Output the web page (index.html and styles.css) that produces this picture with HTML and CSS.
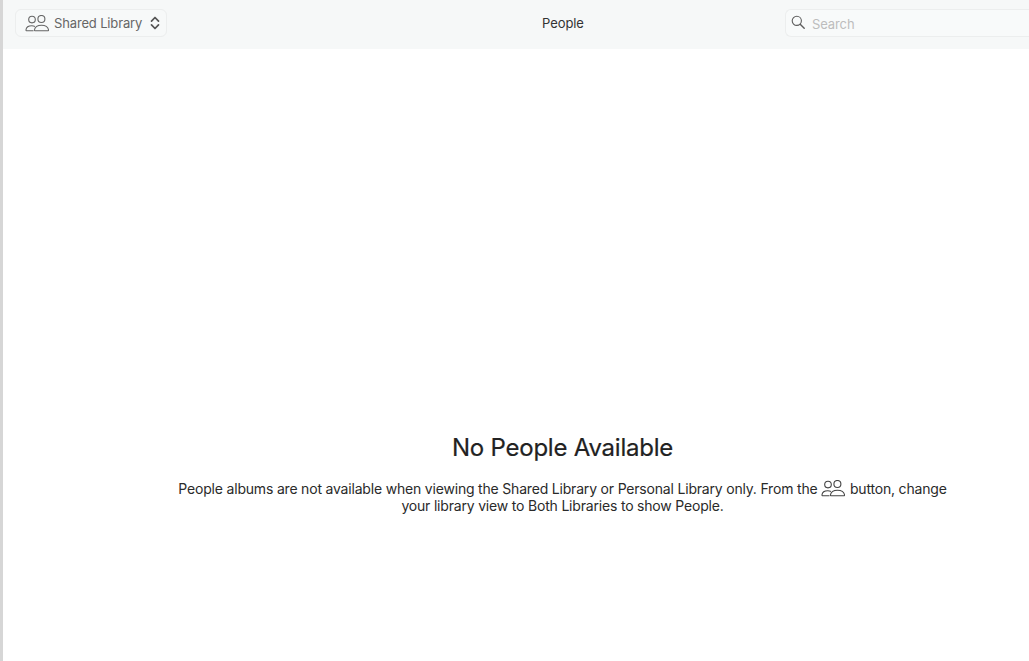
FILE: index.html
```html
<!DOCTYPE html>
<html lang="en">
<head>
<meta charset="utf-8">
<title>People</title>
<link rel="stylesheet" href="styles.css">
</head>
<body>
<div class="window">
  <header class="toolbar">
    <div class="toolbar-left">
      <button class="library-btn">
        <svg class="people-icon" viewBox="0 0 24 17" width="24" height="17" fill="none" stroke="currentColor" stroke-width="1.100"><circle cx="7" cy="4.600" r="3.300"/><circle cx="16.400" cy="4" r="3.500"/><path d="M8.500 15.800H2c-.7 0-1.100-.4-1-1 .3-2.500 2.700-4 5.800-4 1.200 0 2.200.2 3.100.6"/><path d="M9.800 15.800h12.700c.8 0 1.200-.4 1-1.100-.5-2.600-3.400-4.500-7-4.500s-6.500 1.900-7 4.500c-.2.700.2 1.100 1 1.100z"/></svg>
        <span class="library-label">Shared Library</span>
        <svg class="chevrons" viewBox="0 0 10 14" width="10" height="14" fill="none" stroke="currentColor" stroke-width="1.700" stroke-linecap="round" stroke-linejoin="round"><path d="M1.500 5.200 5 1.500l3.500 3.700"/><path d="M1.500 8.800 5 12.500l3.500-3.700"/></svg>
      </button>
    </div>
    <div class="toolbar-title">People</div>
    <div class="toolbar-right">
      <div class="search">
        <svg class="search-icon" viewBox="0 0 14 14" width="14" height="14" fill="none" stroke="currentColor" stroke-width="1.100"><circle cx="5.800" cy="5.800" r="4.600"/><path d="m9.200 9.200 4 4" stroke-width="1.400" stroke-linecap="round"/></svg>
        <span class="search-placeholder">Search</span>
      </div>
    </div>
  </header>
  <main class="empty">
    <h1 class="empty-title">No People Available</h1>
    <p class="empty-text">People albums are not available when viewing the Shared Library or Personal Library only. From the <svg class="people-icon inline" viewBox="0 0 24 17" width="24" height="17" fill="none" stroke="currentColor" stroke-width="1.100"><circle cx="7" cy="4.600" r="3.300"/><circle cx="16.400" cy="4" r="3.500"/><path d="M8.500 15.800H2c-.7 0-1.100-.4-1-1 .3-2.500 2.700-4 5.800-4 1.200 0 2.200.2 3.100.6"/><path d="M9.800 15.800h12.700c.8 0 1.200-.4 1-1.100-.5-2.600-3.400-4.500-7-4.500s-6.500 1.900-7 4.500c-.2.700.2 1.100 1 1.100z"/></svg> button, change<br>your library view to Both Libraries to show People.</p>
  </main>
</div>
</body>
</html>
```
FILE: styles.css
```css
* { box-sizing: border-box; }
html, body { margin: 0; height: 100%; overflow: hidden; }
body { font-family: Inter, "Liberation Sans", sans-serif; background: #fff; color: #222; }
.window { height: 661px; display: flex; flex-direction: column; border-left: 3px solid #d6d6d6; }
.toolbar { height: 49px; flex: none; background: #f6f8f8; display: grid; grid-template-columns: 1fr 1fr; position: relative; align-items: center; }
.toolbar-left { padding-left: 12px; }
.library-btn { display: flex; align-items: center; width: 152px; height: 28px; padding: 0 0 0 9px; margin-top: -3px; border: 1px solid #eceeee; border-radius: 6px; background: #f7f9f9; color: #666; font: 13px/16px Inter, "Liberation Sans", sans-serif; letter-spacing: -0.15px; }
.library-label { margin-left: 5px; white-space: nowrap; }
.chevrons { margin-left: 8px; color: #555; }
.toolbar-title { position: absolute; left: 539px; top: 15px; font-size: 13px; line-height: 16px; color: #333; letter-spacing: -0.07px; }
.toolbar-right { grid-column: 2; justify-self: end; width: 244px; }
.search { display: flex; align-items: center; height: 28px; margin-top: -3px; padding-left: 6px; border: 1px solid #eceeee; border-right: 0; border-radius: 6px 0 0 6px; background: #f8fafa; }
.search-icon { color: #5e5e5e; margin-top: -3px; margin-left: -1px; }
.search-placeholder { margin-left: 7px; margin-top: 2px; font-size: 13px; color: #bdbdbd; letter-spacing: -0.1px; }
.empty { flex: 1; display: flex; flex-direction: column; align-items: center; padding-top: 384px; padding-left: 93px; }
.empty-title { margin: 0; font-size: 24px; line-height: 30px; font-weight: 400; color: #222; letter-spacing: -0.23px; -webkit-text-stroke: 0.2px #222; }
.empty-text { margin: 17px 0 0; font-size: 14px; line-height: 17px; text-align: center; color: #2a2a2a; letter-spacing: -0.19px; }
.people-icon.inline { vertical-align: -3px; color: #444; margin-right: 1px; }
```
